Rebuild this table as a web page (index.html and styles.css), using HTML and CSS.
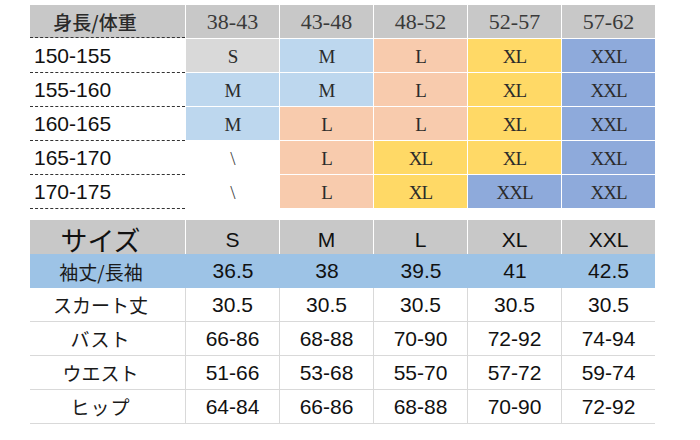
FILE: index.html
```html
<!DOCTYPE html>
<html>
<head>
<meta charset="utf-8">
<link rel="stylesheet" href="styles.css">
</head>
<body>
<div class="page">
  <div class="chart">
    <div class="hc first">身長/体重</div>
    <div class="hc num">38-43</div>
    <div class="hc num">43-48</div>
    <div class="hc num">48-52</div>
    <div class="hc num">52-57</div>
    <div class="hc num">57-62</div>

    <div class="rl">150-155</div>
    <div class="sz s">S</div>
    <div class="sz m">M</div>
    <div class="sz l">L</div>
    <div class="sz xl">XL</div>
    <div class="sz xxl">XXL</div>

    <div class="rl">155-160</div>
    <div class="sz m">M</div>
    <div class="sz m">M</div>
    <div class="sz l">L</div>
    <div class="sz xl">XL</div>
    <div class="sz xxl">XXL</div>

    <div class="rl">160-165</div>
    <div class="sz m">M</div>
    <div class="sz l">L</div>
    <div class="sz l">L</div>
    <div class="sz xl">XL</div>
    <div class="sz xxl">XXL</div>

    <div class="rl">165-170</div>
    <div class="sz none">\</div>
    <div class="sz l">L</div>
    <div class="sz xl">XL</div>
    <div class="sz xl">XL</div>
    <div class="sz xxl">XXL</div>

    <div class="rl">170-175</div>
    <div class="sz none">\</div>
    <div class="sz l">L</div>
    <div class="sz xl">XL</div>
    <div class="sz xxl">XXL</div>
    <div class="sz xxl">XXL</div>
  </div>

  <div class="measure">
    <div class="row head">
      <div class="c lab big">サイズ</div>
      <div class="c">S</div>
      <div class="c">M</div>
      <div class="c">L</div>
      <div class="c">XL</div>
      <div class="c">XXL</div>
    </div>
    <div class="row blue">
      <div class="c lab">袖丈/長袖</div>
      <div class="c">36.5</div>
      <div class="c">38</div>
      <div class="c">39.5</div>
      <div class="c">41</div>
      <div class="c">42.5</div>
    </div>
    <div class="row plain">
      <div class="c lab">スカート丈</div>
      <div class="c">30.5</div>
      <div class="c">30.5</div>
      <div class="c">30.5</div>
      <div class="c">30.5</div>
      <div class="c">30.5</div>
    </div>
    <div class="row plain">
      <div class="c lab wide">バスト</div>
      <div class="c">66-86</div>
      <div class="c">68-88</div>
      <div class="c">70-90</div>
      <div class="c">72-92</div>
      <div class="c">74-94</div>
    </div>
    <div class="row plain">
      <div class="c lab">ウエスト</div>
      <div class="c">51-66</div>
      <div class="c">53-68</div>
      <div class="c">55-70</div>
      <div class="c">57-72</div>
      <div class="c">59-74</div>
    </div>
    <div class="row plain">
      <div class="c lab wide">ヒップ</div>
      <div class="c">64-84</div>
      <div class="c">66-86</div>
      <div class="c">68-88</div>
      <div class="c">70-90</div>
      <div class="c">72-92</div>
    </div>
  </div>
</div>
</body>
</html>
```

FILE: styles.css
```css
html, body {
  margin: 0;
  padding: 0;
  background: #ffffff;
}

.page {
  width: 700px;
  height: 440px;
  padding: 5px 0 0 30px;
  box-sizing: border-box;
  font-family: "Liberation Sans", Arial, sans-serif;
  color: #111;
}

.chart {
  display: grid;
  grid-template-columns: 155px repeat(5, 93px);
  grid-auto-rows: 33px;
  column-gap: 1px;
  row-gap: 1px;
  width: 625px;
}

.hc {
  background: #c8c8c8;
  display: flex;
  align-items: center;
  justify-content: center;
}

.hc.first {
  font-family: "Noto Sans CJK JP", sans-serif;
  font-size: 19px;
  color: #2a2a2a;
  padding-right: 25px;
  border-bottom: 1px dashed #333;
  font-weight: 500;
}

.hc.num {
  font-family: "Liberation Serif", serif;
  font-size: 22px;
  color: #3a3a3a;
  padding-top: 1px;
}

.rl {
  display: flex;
  align-items: center;
  padding-left: 4px;
  font-size: 21px;
  color: #111;
  border-bottom: 1px dashed #333;
  margin-bottom: -1px;
  padding-top: 1px;
}

.sz {
  display: flex;
  align-items: center;
  justify-content: center;
  font-family: "Liberation Serif", serif;
  font-size: 19px;
  letter-spacing: -1px;
  color: #2b2b2b;
  padding-top: 2px;
}

.sz.s { background: #d9d9d9; }
.sz.m { background: #bdd7ee; }
.sz.l { background: #f8cbad; }
.sz.xl { background: #ffd966; }
.sz.xxl { background: #8eaadb; }
.sz.none { background: #ffffff; color: #444; }

.measure {
  margin-top: 12px;
  width: 625px;
  display: flex;
  flex-direction: column;
}

.row {
  display: grid;
  grid-template-columns: 156px repeat(4, 94px) 93px;
  height: 34px;
}

.c {
  display: flex;
  align-items: center;
  justify-content: center;
  font-size: 21px;
  color: #111;
  box-sizing: border-box;
}

.row.head .c {
  background: #c8c8c8;
  border-right: 1px solid #ffffff;
  font-size: 21px;
}

.row.blue .c {
  background: #9dc3e6;
}

.row.plain .c {
  border-right: 1px solid #d9d9d9;
  border-bottom: 1px solid #d9d9d9;
}

.row .c:last-child {
  border-right: none;
}

.row .c.lab {
  font-family: "Noto Sans CJK JP", sans-serif;
  font-size: 19px;
  padding-right: 14px;
  color: #1a1a1a;
}

.row .c.lab.big {
  font-size: 27px;
  color: #111;
}

.row .c.lab.wide {
  letter-spacing: 1px;
}
```
